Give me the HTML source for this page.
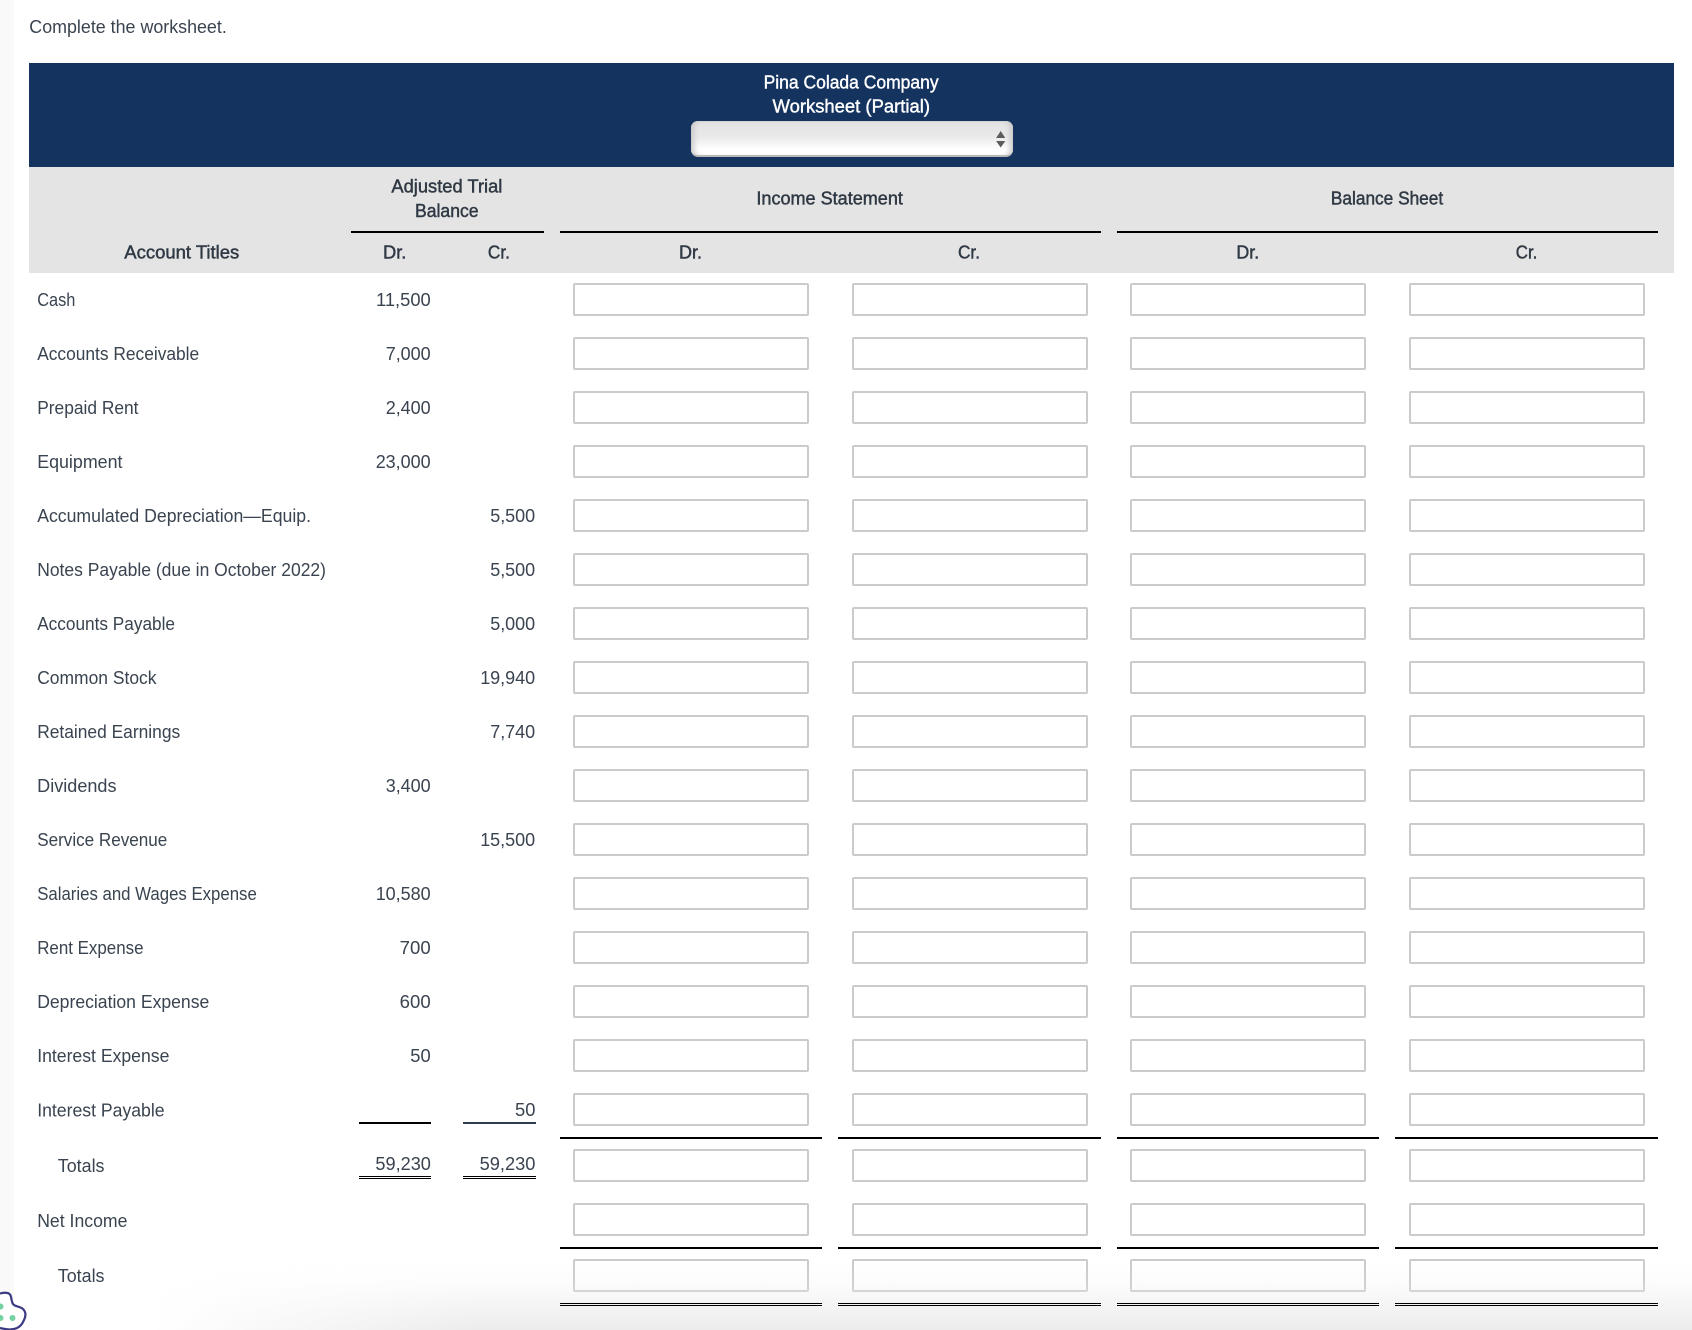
<!DOCTYPE html>
<html>
<head>
<meta charset="utf-8">
<style>
html,body{margin:0;padding:0;width:1692px;height:1330px;background:#fff;overflow:hidden}
#gut{position:absolute;left:0;top:0;width:14px;height:1330px;background:#f9f9f9}
svg{position:absolute;left:0;top:0}
text{font-family:"Liberation Sans",sans-serif;font-size:18px;fill:#3a4450}
.h{fill:#2f3944;stroke:#2f3944;stroke-width:.45px}
.w{fill:#fff;stroke:#fff;stroke-width:.4px}
#sel{position:absolute;left:691px;top:121px;width:322px;height:36px;box-sizing:border-box;border-radius:7px;
background:linear-gradient(#e3e3e3 0,#e9e9e9 45%,#fff 85%,#fff 100%);border-bottom:2px solid #b9b9b9;
box-shadow:inset 7px 0 6px -4px #c8c8c8,inset -7px 0 6px -4px #c8c8c8,inset 0 1px 1px #d4d4d4}
#fade{position:absolute;left:0;top:1262px;width:1692px;height:68px;
background:linear-gradient(rgba(236,236,236,0) 0,rgba(236,236,236,.15) 30%,rgba(236,236,236,1) 100%);
-webkit-mask-image:linear-gradient(90deg,transparent 150px,#000 480px);mask-image:linear-gradient(90deg,transparent 150px,#000 480px)}
</style>
</head>
<body>
<div id="gut"></div>
<svg width="1692" height="1330" viewBox="0 0 1692 1330" xmlns="http://www.w3.org/2000/svg">
<defs>
<g id="r" fill="#fff" stroke="#cbcbcb" stroke-width="2">
<rect x="574" y="284" width="234" height="31" rx="1"/>
<rect x="853" y="284" width="234" height="31" rx="1"/>
<rect x="1131" y="284" width="234" height="31" rx="1"/>
<rect x="1410" y="284" width="234" height="31" rx="1"/>
</g>
</defs>
<rect x="29" y="63" width="1645" height="104" fill="#14335f"/>
<rect x="29" y="167" width="1645" height="106" fill="#e4e4e4"/>
<g fill="#000">
<rect x="351" y="231" width="193" height="2"/>
<rect x="560" y="231" width="541" height="2"/>
<rect x="1117" y="231" width="541" height="2"/>
</g>
<use href="#r"/><use href="#r" y="54"/><use href="#r" y="108"/><use href="#r" y="162"/><use href="#r" y="216"/>
<use href="#r" y="270"/><use href="#r" y="324"/><use href="#r" y="378"/><use href="#r" y="432"/><use href="#r" y="486"/>
<use href="#r" y="540"/><use href="#r" y="594"/><use href="#r" y="648"/><use href="#r" y="702"/><use href="#r" y="756"/>
<use href="#r" y="810"/><use href="#r" y="866"/><use href="#r" y="920"/><use href="#r" y="976"/>
<g fill="#000">
<rect x="560" y="1137" width="262" height="2"/><rect x="838" y="1137" width="263" height="2"/><rect x="1117" y="1137" width="262" height="2"/><rect x="1395" y="1137" width="263" height="2"/>
<rect x="560" y="1247" width="262" height="2"/><rect x="838" y="1247" width="263" height="2"/><rect x="1117" y="1247" width="262" height="2"/><rect x="1395" y="1247" width="263" height="2"/>
<rect x="359" y="1122" width="72" height="2"/>
<rect x="359" y="1176" width="72" height="1"/><rect x="359" y="1178" width="72" height="1"/>
<rect x="463" y="1176" width="73" height="1"/><rect x="463" y="1178" width="73" height="1"/>
</g>
<rect x="463" y="1122" width="73" height="2" fill="#2e3d4f"/>

<text x="29.3" y="33" textLength="197.5" lengthAdjust="spacingAndGlyphs">Complete the worksheet.</text>
<text class="w" x="763.6" y="88.5" textLength="175" lengthAdjust="spacingAndGlyphs">Pina Colada Company</text>
<text class="w" x="772.5" y="112.5" textLength="157.5" lengthAdjust="spacingAndGlyphs">Worksheet (Partial)</text>
<text class="h" x="391.4" y="192.5" textLength="111" lengthAdjust="spacingAndGlyphs">Adjusted Trial</text>
<text class="h" x="415" y="217" textLength="63.6" lengthAdjust="spacingAndGlyphs">Balance</text>
<text class="h" x="756.4" y="204.5" textLength="146.5" lengthAdjust="spacingAndGlyphs">Income Statement</text>
<text class="h" x="1330.9" y="204.5" textLength="112.3" lengthAdjust="spacingAndGlyphs">Balance Sheet</text>
<text class="h" x="124.3" y="258.5" textLength="115" lengthAdjust="spacingAndGlyphs">Account Titles</text>
<text class="h" x="383" y="258.5" textLength="23.4" lengthAdjust="spacingAndGlyphs">Dr.</text>
<text class="h" x="487.9" y="258.5" textLength="22" lengthAdjust="spacingAndGlyphs">Cr.</text>
<text class="h" x="679" y="258.5" textLength="23" lengthAdjust="spacingAndGlyphs">Dr.</text>
<text class="h" x="958" y="258.5" textLength="22" lengthAdjust="spacingAndGlyphs">Cr.</text>
<text class="h" x="1236.4" y="258.5" textLength="22.8" lengthAdjust="spacingAndGlyphs">Dr.</text>
<text class="h" x="1515.8" y="258.5" textLength="21.5" lengthAdjust="spacingAndGlyphs">Cr.</text>

<text x="37.2" y="306" textLength="38.2" lengthAdjust="spacingAndGlyphs">Cash</text>
<text x="37.2" y="360" textLength="162" lengthAdjust="spacingAndGlyphs">Accounts Receivable</text>
<text x="37.2" y="414" textLength="101.3" lengthAdjust="spacingAndGlyphs">Prepaid Rent</text>
<text x="37.2" y="468" textLength="85.3" lengthAdjust="spacingAndGlyphs">Equipment</text>
<text x="37.2" y="522" textLength="273.8" lengthAdjust="spacingAndGlyphs">Accumulated Depreciation—Equip.</text>
<text x="37.2" y="576" textLength="288.8" lengthAdjust="spacingAndGlyphs">Notes Payable (due in October 2022)</text>
<text x="37.2" y="630" textLength="137.8" lengthAdjust="spacingAndGlyphs">Accounts Payable</text>
<text x="37.2" y="684" textLength="119.3" lengthAdjust="spacingAndGlyphs">Common Stock</text>
<text x="37.2" y="738" textLength="143" lengthAdjust="spacingAndGlyphs">Retained Earnings</text>
<text x="37.2" y="792" textLength="79.3" lengthAdjust="spacingAndGlyphs">Dividends</text>
<text x="37.2" y="846" textLength="130.1" lengthAdjust="spacingAndGlyphs">Service Revenue</text>
<text x="37.2" y="900" textLength="219.6" lengthAdjust="spacingAndGlyphs">Salaries and Wages Expense</text>
<text x="37.2" y="954" textLength="106.3" lengthAdjust="spacingAndGlyphs">Rent Expense</text>
<text x="37.2" y="1008" textLength="172.1" lengthAdjust="spacingAndGlyphs">Depreciation Expense</text>
<text x="37.2" y="1062" textLength="132.2" lengthAdjust="spacingAndGlyphs">Interest Expense</text>
<text x="37.2" y="1116.5" textLength="127.4" lengthAdjust="spacingAndGlyphs">Interest Payable</text>
<text x="57.8" y="1172" textLength="46.7" lengthAdjust="spacingAndGlyphs">Totals</text>
<text x="37.2" y="1227" textLength="90.2" lengthAdjust="spacingAndGlyphs">Net Income</text>
<text x="57.8" y="1282" textLength="46.7" lengthAdjust="spacingAndGlyphs">Totals</text>

<text x="376" y="306" textLength="54.7" lengthAdjust="spacingAndGlyphs">11,500</text>
<text x="385.7" y="360" textLength="45" lengthAdjust="spacingAndGlyphs">7,000</text>
<text x="385.7" y="414" textLength="45" lengthAdjust="spacingAndGlyphs">2,400</text>
<text x="375.7" y="468" textLength="55" lengthAdjust="spacingAndGlyphs">23,000</text>
<text x="490.2" y="522" textLength="45" lengthAdjust="spacingAndGlyphs">5,500</text>
<text x="490.2" y="576" textLength="45" lengthAdjust="spacingAndGlyphs">5,500</text>
<text x="490.2" y="630" textLength="45" lengthAdjust="spacingAndGlyphs">5,000</text>
<text x="480.2" y="684" textLength="55" lengthAdjust="spacingAndGlyphs">19,940</text>
<text x="490.2" y="738" textLength="45" lengthAdjust="spacingAndGlyphs">7,740</text>
<text x="385.7" y="792" textLength="45" lengthAdjust="spacingAndGlyphs">3,400</text>
<text x="480.2" y="846" textLength="55" lengthAdjust="spacingAndGlyphs">15,500</text>
<text x="375.7" y="900" textLength="55" lengthAdjust="spacingAndGlyphs">10,580</text>
<text x="399.7" y="954" textLength="31" lengthAdjust="spacingAndGlyphs">700</text>
<text x="399.7" y="1008" textLength="31" lengthAdjust="spacingAndGlyphs">600</text>
<text x="410.3" y="1062" textLength="20.4" lengthAdjust="spacingAndGlyphs">50</text>
<text x="515" y="1116" textLength="20.4" lengthAdjust="spacingAndGlyphs">50</text>
<text x="375.4" y="1170" textLength="55.5" lengthAdjust="spacingAndGlyphs">59,230</text>
<text x="479.6" y="1170" textLength="55.8" lengthAdjust="spacingAndGlyphs">59,230</text>
</svg>
<div id="sel"></div>
<svg width="1692" height="1330" viewBox="0 0 1692 1330" xmlns="http://www.w3.org/2000/svg">
<path d="M1000.7 131 L1005.3 138 L996.1 138 Z" fill="#5c5c5c"/>
<path d="M996.1 141 L1005.3 141 L1000.7 147.5 Z" fill="#5c5c5c"/>
</svg>
<div id="fade"></div>
<svg width="1692" height="1330" viewBox="0 0 1692 1330" xmlns="http://www.w3.org/2000/svg">
<g fill="#000">
<rect x="560" y="1303" width="262" height="1"/><rect x="838" y="1303" width="263" height="1"/><rect x="1117" y="1303" width="262" height="1"/><rect x="1395" y="1303" width="263" height="1"/>
<rect x="560" y="1305" width="262" height="1"/><rect x="838" y="1305" width="263" height="1"/><rect x="1117" y="1305" width="262" height="1"/><rect x="1395" y="1305" width="263" height="1"/>
</g>
<path d="M0 1293.5 C4 1292.5 8 1292 10 1294.5 C12 1297.5 11 1301 13 1304 C15 1307 20 1306 23 1309 C26 1312 26 1316 24 1320 C22 1325 19 1328 14 1329 C10 1330 4 1329 0 1328" fill="#fff" stroke="#3b3a82" stroke-width="2.2"/>
<circle cx="0.5" cy="1306.5" r="3" fill="#74d1a0"/>
<circle cx="0.5" cy="1318" r="3" fill="#74d1a0"/>
<circle cx="12.5" cy="1318" r="3" fill="#74d1a0"/>
</svg>
</body>
</html>
